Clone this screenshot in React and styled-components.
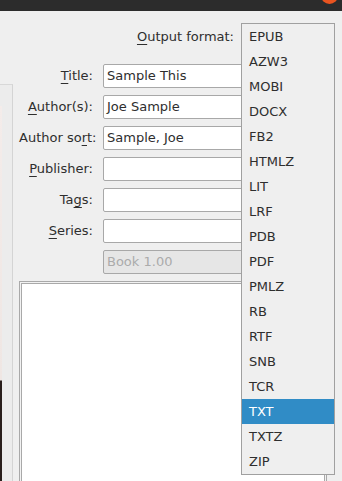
import styled, { createGlobalStyle } from "styled-components";

const formats = [
  "EPUB", "AZW3", "MOBI", "DOCX", "FB2", "HTMLZ", "LIT", "LRF", "PDB",
  "PDF", "PMLZ", "RB", "RTF", "SNB", "TCR", "TXT", "TXTZ", "ZIP",
];

const fields = [
  { label: "Title", key: 0, value: "Sample This" },
  { label: "Author(s)", key: 0, value: "Joe Sample" },
  { label: "Author sort", key: 9, value: "Sample, Joe" },
  { label: "Publisher", key: 0, value: "" },
  { label: "Tags", key: 2, value: "" },
  { label: "Series", key: 0, value: "" },
];

function Mnemonic({ text, at }) {
  return (
    <>
      {text.slice(0, at)}
      <u>{text[at]}</u>
      {text.slice(at + 1)}
    </>
  );
}

export default function App() {
  return (
    <>
      <GlobalStyle />
      <TitleBar>
        <CloseDot />
      </TitleBar>
      <Window>
        <CoverPanel>
          <CoverStrip />
        </CoverPanel>
        <FormArea>
          <OutputRow>
            <Label>
              <Mnemonic text="Output format:" at={0} />
            </Label>
            <ComboBox />
          </OutputRow>
          <FieldGrid>
            {fields.map((f) => (
              <FieldRow key={f.label}>
                <Label>
                  <Mnemonic text={f.label + ":"} at={f.key} />
                </Label>
                <TextInput>{f.value}</TextInput>
              </FieldRow>
            ))}
            <FieldRow>
              <span />
              <TextInput $disabled>Book 1.00</TextInput>
            </FieldRow>
          </FieldGrid>
          <CommentsFrame>
            <CommentsInner />
          </CommentsFrame>
        </FormArea>
      </Window>
      <Popup>
        {formats.map((f) => (
          <PopupItem key={f} $selected={f === "TXT"}>
            {f}
          </PopupItem>
        ))}
      </Popup>
    </>
  );
}

const GlobalStyle = createGlobalStyle`
  html, body {
    margin: 0;
    background: #efefef;
    overflow: hidden;
  }
  body {
    font-family: "DejaVu Sans", "Noto Sans", sans-serif;
    font-size: 13px;
    color: #2e2e2e;
  }
  u {
    text-decoration-thickness: 1px;
    text-underline-offset: 3px;
  }
`;

const TitleBar = styled.div`
  position: relative;
  height: 11px;
  background: #2c2c2c;
  overflow: hidden;
`;

const CloseDot = styled.div`
  position: absolute;
  right: 4px;
  top: -13px;
  width: 17px;
  height: 17px;
  border-radius: 50%;
  background: #e95420;
`;

const Window = styled.div`
  display: flex;
  height: 470px;
`;

const CoverPanel = styled.div`
  width: 12px;
  margin-top: 73px;
  border-top: 1px solid #d8d8d8;
  border-right: 1px solid #d4d4d4;
  background: #ececec;
  padding-top: 21px;
`;

const CoverStrip = styled.div`
  width: 2px;
  height: 376px;
  background: linear-gradient(
    to bottom,
    #f4ecea 0,
    #efe6e3 274px,
    #2a1f1c 275px,
    #2a1f1c 100%
  );
`;

const FormArea = styled.div`
  flex: 1;
  margin-left: 6px;
  margin-right: 15px;
  padding-top: 14px;
  display: flex;
  flex-direction: column;
`;

const OutputRow = styled.div`
  display: flex;
  justify-content: flex-end;
  align-items: center;
  gap: 7px;
  height: 26px;
`;

const ComboBox = styled.div`
  width: 86px;
  height: 24px;
  border: 1px solid #aaa;
  border-radius: 2px;
  background: #f4f4f4;
  box-sizing: border-box;
`;

const FieldGrid = styled.div`
  display: flex;
  flex-direction: column;
  gap: 7px;
  margin-top: 15px;
`;

const FieldRow = styled.div`
  display: grid;
  grid-template-columns: 74px 1fr;
  column-gap: 10px;
  align-items: center;
`;

const Label = styled.label`
  text-align: right;
  white-space: nowrap;
  line-height: 16px;
`;

const TextInput = styled.div`
  height: 24px;
  box-sizing: border-box;
  border: 1px solid #a8a8a8;
  border-radius: 2px;
  background: ${(p) => (p.$disabled ? "#e6e6e6" : "#ffffff")};
  color: ${(p) => (p.$disabled ? "#ababab" : "#2e2e2e")};
  padding: 0 3px;
  line-height: 22px;
  white-space: nowrap;
  overflow: hidden;
`;

const CommentsFrame = styled.div`
  margin-top: 7px;
  height: 220px;
  border: 1px solid #a9a9a9;
  padding: 1px;
  background: #f2f2f2;
  flex-shrink: 0;
`;

const CommentsInner = styled.div`
  height: 100%;
  box-sizing: border-box;
  border: 1px solid #a9a9a9;
  background: #ffffff;
`;

const Popup = styled.div`
  position: absolute;
  left: 241px;
  top: 23px;
  width: 94px;
  box-sizing: border-box;
  border: 1px solid #a0a0a0;
  background: #efefef;
  padding: 0;
`;

const PopupItem = styled.div`
  height: 25px;
  line-height: 25px;
  padding-left: 7px;
  background: ${(p) => (p.$selected ? "#308cc6" : "transparent")};
  color: ${(p) => (p.$selected ? "#ffffff" : "#2e2e2e")};
`;
